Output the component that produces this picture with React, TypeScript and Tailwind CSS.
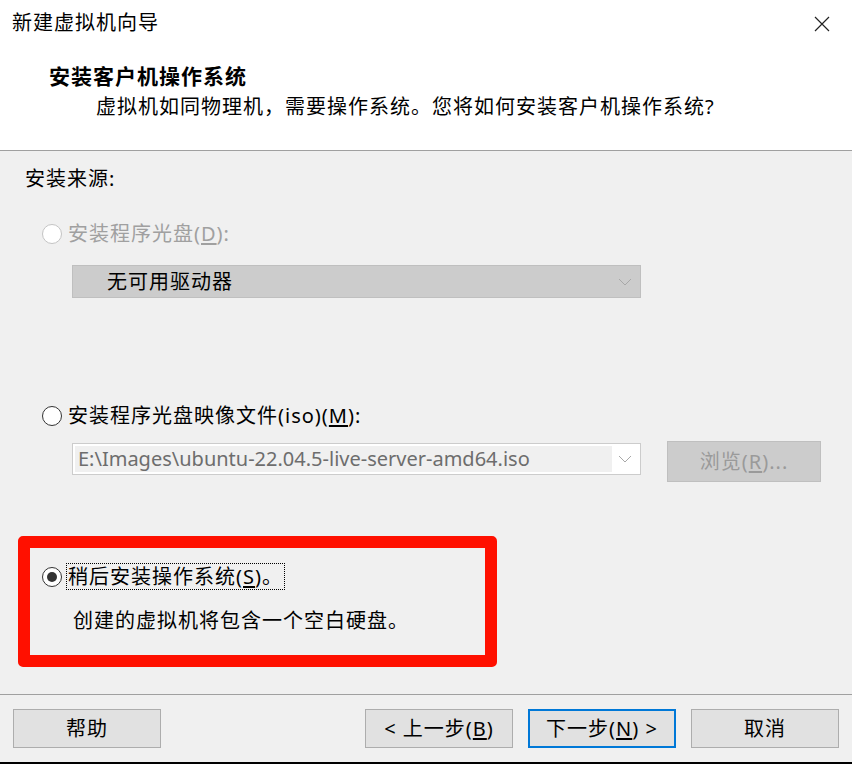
import type { FC, ReactNode } from "react";

const font = { fontFamily: '"Noto Sans", "Noto Sans CJK SC", sans-serif' };

const Radio: FC<{ checked?: boolean; disabled?: boolean }> = ({ checked, disabled }) => (
  <span
    className={`flex h-[20px] w-[20px] shrink-0 items-center justify-center rounded-full border bg-white ${
      disabled ? "border-[#c4c4c4]" : "border-[#333333]"
    }`}
  >
    {checked && <span className="h-[10px] w-[10px] rounded-full bg-[#333333]" />}
  </span>
);

const Chevron: FC = () => (
  <svg width="14" height="8" viewBox="0 0 14 8" className="shrink-0">
    <path d="M1 1 L7 7 L13 1" fill="none" stroke="#a8a8a8" strokeWidth="1" />
  </svg>
);

const Button: FC<{ children: ReactNode; primary?: boolean }> = ({ children, primary }) => (
  <div
    className={`flex h-[39px] w-[148px] items-center justify-center bg-[#e1e1e1] text-[20px] leading-[24px] text-black ${
      primary ? "border-2 border-[#0078d7]" : "border border-[#adadad]"
    }`}
  >
    {children}
  </div>
);

export default function App() {
  return (
    <div
      style={font}
      className="flex h-[764px] w-[852px] flex-col overflow-hidden bg-[#f0f0f0] tracking-[1px] text-black"
    >
      {/* header */}
      <div className="h-[151px] shrink-0 border-b border-[#a0a0a0] bg-white">
        <div className="flex items-start justify-between pl-[12px] pr-[22px] pt-[11px]">
          <div className="text-[20px] leading-[24px]">新建虚拟机向导</div>
          <svg width="16" height="16" viewBox="0 0 16 16" className="mt-[5px]">
            <path d="M1 1 L15 15 M15 1 L1 15" stroke="#222" strokeWidth="1.2" />
          </svg>
        </div>
        <div className="mt-[29px] pl-[49px] text-[21px] font-bold leading-[24px]">安装客户机操作系统</div>
        <div className="mt-[7px] pl-[96px] text-[20px] leading-[24px]">
          虚拟机如同物理机，需要操作系统。您将如何安装客户机操作系统?
        </div>
      </div>

      {/* body */}
      <div className="flex flex-col pt-[16px]">
        <div className="pl-[25px] text-[20px] leading-[24px]">安装来源:</div>

        <div className="mt-[31px] flex h-[24px] items-center gap-[6px] pl-[42px] text-[20px] leading-[24px] text-[#a0a0a0]">
          <Radio disabled />
          <span>
            安装程序光盘(<span className="underline underline-offset-2">D</span>):
          </span>
        </div>

        <div className="ml-[72px] mt-[19px] flex h-[33px] w-[569px] items-center justify-between border border-[#bfbfbf] bg-[#cccccc] pl-[34px] pr-[8px] text-[20px] leading-[24px]">
          <span>无可用驱动器</span>
          <Chevron />
        </div>

        <div className="mt-[106px] flex h-[24px] items-center gap-[6px] pl-[42px] text-[20px] leading-[24px]">
          <Radio />
          <span>
            安装程序光盘映像文件(iso)(<span className="underline underline-offset-2">M</span>):
          </span>
        </div>

        <div className="mt-[13px] flex items-start pl-[72px]">
          <div className="mt-[2px] flex h-[32px] w-[569px] items-center border border-[#cccccc] bg-white p-[2px] pr-[8px]">
            <div className="flex h-full flex-1 items-center bg-[#f0f0f0] pl-[3px] text-[20px] leading-[24px] tracking-normal text-[#6d6d6d]">
              E:\Images\ubuntu-22.04.5-live-server-amd64.iso
            </div>
            <div className="ml-[6px]">
              <Chevron />
            </div>
          </div>
          <div className="ml-[26px] flex h-[41px] w-[154px] items-center justify-center border border-[#bfbfbf] bg-[#cccccc] text-[20px] leading-[24px] text-[#9a9a9a]">
            浏览(<span className="underline underline-offset-2">R</span>)...
          </div>
        </div>

        <div className="ml-[18px] mt-[54px] h-[131px] w-[479px] rounded-[5px] border-[12px] border-[#ff1000]">
          <div className="mt-[15px] flex items-center gap-[4px] pl-[12px]">
            <Radio checked />
            <span className="border border-dotted border-black px-[1px] text-[20px] leading-[25px]">
              稍后安装操作系统(<span className="underline underline-offset-2">S</span>)。
            </span>
          </div>
          <div className="mt-[19px] pl-[43px] text-[20px] leading-[24px]">创建的虚拟机将包含一个空白硬盘。</div>
        </div>
      </div>

      {/* footer */}
      <div className="mt-auto flex items-center border-t border-[#a0a0a0] px-[13px] pb-[14px] pt-[14px]">
        <Button>帮助</Button>
        <div className="ml-auto flex gap-[15px]">
          <Button>
            &lt; 上一步(<span className="underline underline-offset-2">B</span>)
          </Button>
          <Button primary>
            下一步(<span className="underline underline-offset-2">N</span>) &gt;
          </Button>
          <Button>取消</Button>
        </div>
      </div>
      <div className="h-[2px] shrink-0 bg-black" />
    </div>
  );
}
